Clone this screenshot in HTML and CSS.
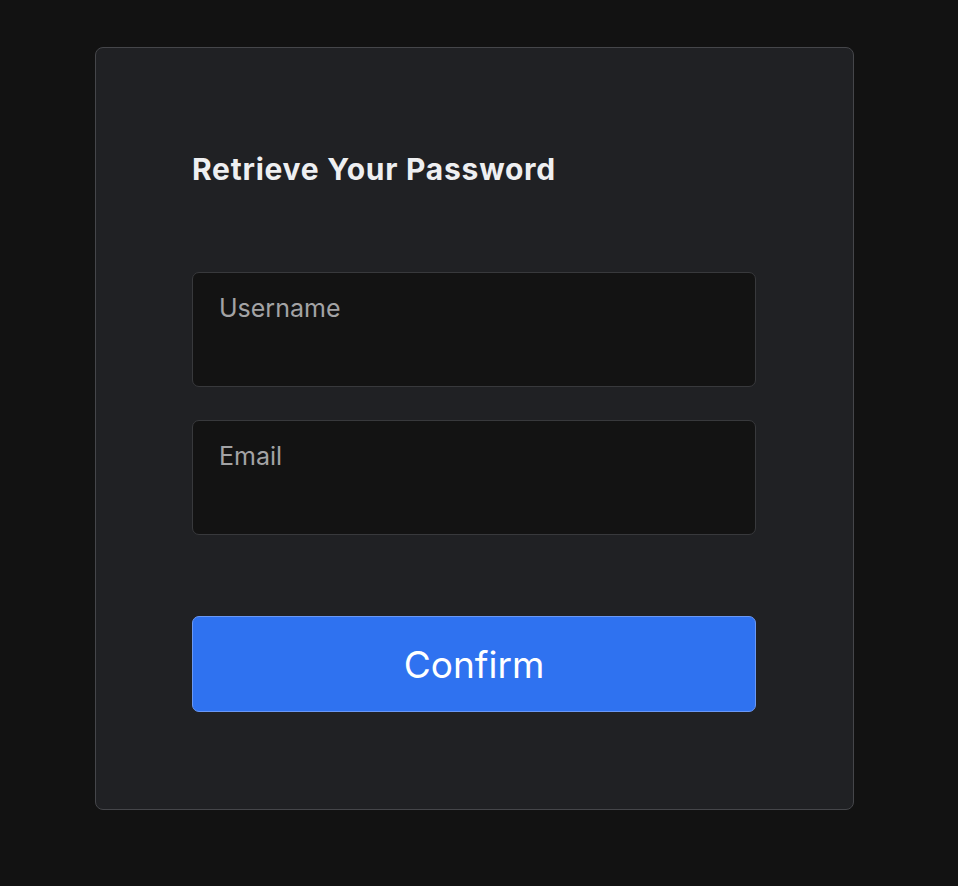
FILE: index.html
```html
<!DOCTYPE html>
<html lang="en">
<head>
<meta charset="utf-8">
<title>Retrieve Your Password</title>
<link rel="stylesheet" href="styles.css">
</head>
<body>
<main class="card">
  <h1 class="card-title">Retrieve Your Password</h1>
  <form class="form">
    <div class="fields">
      <textarea class="field" placeholder="Username"></textarea>
      <textarea class="field" placeholder="Email"></textarea>
    </div>
    <button type="button" class="btn-confirm">Confirm</button>
  </form>
</main>
</body>
</html>
```
FILE: styles.css
```css
* { box-sizing: border-box; }
html, body {
  margin: 0;
  padding: 0;
  background: #121212;
  height: 100%;
}
body {
  font-family: Inter, "Noto Sans", sans-serif;
  padding: 47px 0 0 95px;
}
.card {
  width: 759px;
  height: 763px;
  background: #202124;
  border: 1px solid #45464a;
  border-radius: 8px;
  padding: 100px 96px 96px 96px;
  display: flex;
  flex-direction: column;
}
.card-title {
  margin: 0;
  font-size: 30px;
  line-height: 42px;
  font-weight: 700;
  color: #eeeff1;
  letter-spacing: 0.75px;
}
.form {
  margin-top: 82px;
  display: flex;
  flex-direction: column;
}
.fields {
  display: flex;
  flex-direction: column;
  gap: 33px;
}
.field {
  display: block;
  width: 564px;
  height: 115px;
  resize: none;
  background: #131313;
  border: 1px solid #38393c;
  border-radius: 7px;
  padding: 19px 26px;
  font-family: inherit;
  font-size: 25px;
  line-height: 32px;
  color: #e6e6e6;
  outline: none;
  overflow: hidden;
}
.field::placeholder {
  color: #a3a3a5;
}
.btn-confirm {
  margin-top: 81px;
  width: 564px;
  height: 96px;
  background: #2f72f0;
  border: 1px solid #6a98f4;
  border-radius: 7px;
  color: #ffffff;
  font-family: inherit;
  font-size: 37px;
  font-weight: 400;
  cursor: pointer;
}
```
